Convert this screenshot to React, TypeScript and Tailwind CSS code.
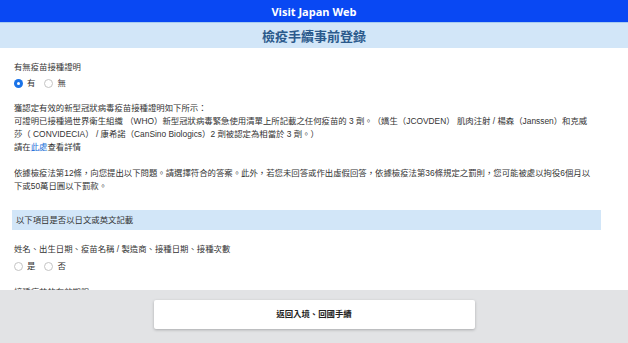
import React, { useState } from 'react';

const font = { fontFamily: '"Liberation Sans", "Noto Sans CJK TC", sans-serif' };

function Radio({ label, checked, onClick }: { label: string; checked: boolean; onClick: () => void }) {
  return (
    <label className="flex items-center gap-[4px] cursor-pointer" onClick={onClick}>
      {checked ? (
        <span className="w-[9px] h-[9px] rounded-full bg-[#1a73e8] flex items-center justify-center">
          <span className="w-[3px] h-[3px] rounded-full bg-white" />
        </span>
      ) : (
        <span className="w-[9px] h-[9px] rounded-full border border-[#c4c4c4] bg-white" />
      )}
      <span>{label}</span>
    </label>
  );
}

export default function App() {
  const [hasCert, setHasCert] = useState('yes');
  const [lang, setLang] = useState<string | null>(null);

  return (
    <div className="h-screen flex flex-col overflow-hidden bg-white text-[#333] text-[8.4px] leading-[13px]" style={font}>
      {/* header */}
      <div className="h-[22px] bg-[#0948f3] flex items-center justify-center shrink-0">
        <span className="text-white font-bold text-[11px]" style={{ fontFamily: '"Open Sans", "Noto Sans", sans-serif' }}>
          Visit Japan Web
        </span>
      </div>
      <div className="h-[26px] bg-[#d2e6f8] border-t border-[#a8cbef] flex items-center justify-center shrink-0">
        <span className="text-[#2b5a8c] font-bold text-[13px]" style={{ fontFamily: '"Noto Sans CJK TC", sans-serif' }}>
          檢疫手續事前登錄
        </span>
      </div>

      {/* content */}
      <div className="flex-1 overflow-hidden">
        <div className="ml-[12px] w-[580px] pl-[2px]">
          <p className="mt-[13px]">有無疫苗接種證明</p>
          <div className="flex gap-[9px] mt-[3px] h-[12px] items-center">
            <Radio label="有" checked={hasCert === 'yes'} onClick={() => setHasCert('yes')} />
            <Radio label="無" checked={hasCert === 'no'} onClick={() => setHasCert('no')} />
          </div>

          <div className="mt-[13px]">
            <p>獲認定有效的新型冠狀病毒疫苗接種證明如下所示：</p>
            <p>
              可證明已接種過世界衛生組織 （WHO）新型冠狀病毒緊急使用清單上所記載之任何疫苗的 3 劑。（嬌生（JCOVDEN） 肌肉注射 / 楊森（Janssen）和克威莎（ CONVIDECIA） / 康希諾（CanSino Biologics）2 劑被認定為相當於 3 劑。）
            </p>
            <p>
              請在<a className="text-[#1a6fd8]">此處</a>查看詳情
            </p>
          </div>

          <p className="mt-[13px]">
            依據檢疫法第12條，向您提出以下問題。請選擇符合的答案。此外，若您未回答或作出虛假回答，依據檢疫法第36條規定之罰則，您可能被處以拘役6個月以下或50萬日圓以下罰款。
          </p>
        </div>

        <div className="ml-[12px] w-[589px] mt-[17px] h-[20px] bg-[#d2e6f8] flex items-center pl-[4px]">
          以下項目是否以日文或英文記載
        </div>

        <div className="ml-[12px] w-[580px] pl-[2px]">
          <p className="mt-[13px]">姓名、出生日期、疫苗名稱 / 製造商、接種日期、接種次數</p>
          <div className="flex gap-[9px] mt-[4px] h-[12px] items-center">
            <Radio label="是" checked={lang === 'yes'} onClick={() => setLang('yes')} />
            <Radio label="否" checked={lang === 'no'} onClick={() => setLang('no')} />
          </div>
          <p className="mt-[14px]">接種疫苗的有效期限</p>
        </div>
      </div>

      {/* footer */}
      <div className="h-[53px] bg-[#e2e3e5] shrink-0 flex justify-center pt-[10px]">
        <button className="w-[321px] h-[29px] bg-white rounded-[2px] shadow-[0_1px_3px_rgba(0,0,0,0.25)] font-bold text-[8.4px] text-[#222]">
          返回入境、回國手續
        </button>
      </div>
    </div>
  );
}
